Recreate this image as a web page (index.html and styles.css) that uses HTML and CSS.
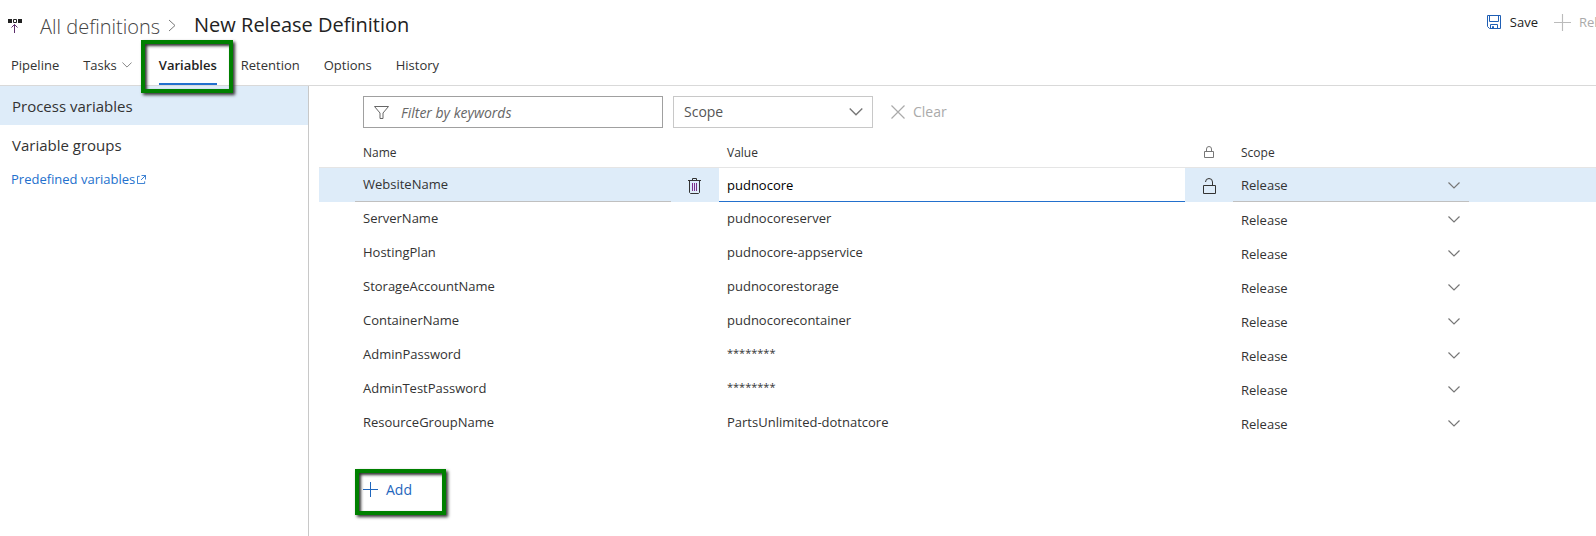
FILE: index.html
```html
<!DOCTYPE html>
<html lang="en">
<head>
<meta charset="utf-8">
<title>New Release Definition</title>
<link rel="stylesheet" href="styles.css">
</head>
<body>
<svg class="sprite" aria-hidden="true">
  <symbol id="chevron" viewBox="0 0 12 7"><path d="M.5 .5 6 6 11.5 .5" fill="none" stroke="currentColor" stroke-width="1.200"/></symbol>
  <symbol id="plus" viewBox="0 0 15 15"><path d="M7.5 0V15M0 7.5H15" fill="none" stroke="currentColor"/></symbol>
</svg>
<header class="top">
  <div class="titlebar">
    <svg class="release-icon" width="14" height="15" viewBox="0 0 14 15"><path d="M0 1h4v4H0zM10 1h4v4h-4z" fill="#222"/><path d="M5.500 1.500h3v3h-3z" fill="none" stroke="#222"/><path d="M6.500 15V6.500M3.500 9.500l3-3 3 3" fill="none" stroke="#5c2d6b"/></svg>
    <a class="crumb" href="#">All definitions</a>
    <svg class="crumb-sep" width="8" height="13" viewBox="0 0 8 13"><path d="M1 1l6 5.500L1 12" fill="none" stroke="#777"/></svg>
    <h1>New Release Definition</h1>
    <div class="actions">
      <button class="action" type="button"><svg width="14" height="14" viewBox="0 0 14 14"><path d="M.5 .5h13v13h-11l-2-2zM2.500 .5v6h9v-6M3.500 13.500v-4h7v4M5.500 13.500v-2h1v2" fill="none" stroke="#1f5fb5"/></svg>Save</button>
      <button class="action action-release" type="button" disabled><svg width="17" height="17"><use href="#plus"/></svg>Release</button>
    </div>
  </div>
  <nav class="tabs">
    <a href="#">Pipeline</a>
    <a href="#" class="tab-menu">Tasks<svg width="10" height="6"><use href="#chevron"/></svg></a>
    <a href="#" class="active" aria-current="page">Variables</a>
    <a href="#">Retention</a>
    <a href="#">Options</a>
    <a href="#">History</a>
  </nav>
</header>
<div class="body">
  <aside class="side">
    <a class="side-item selected" href="#">Process variables</a>
    <a class="side-item" href="#">Variable groups</a>
    <a class="side-link" href="#">Predefined variables<svg width="9" height="9" viewBox="0 0 10 10"><path d="M3 1.500H.5v8h8V7M5 .5h4.500V5M9.500 .5l-5 5" fill="none" stroke="currentColor"/></svg></a>
  </aside>
  <main class="main">
    <div class="filters">
      <label class="search"><svg width="15" height="13" viewBox="0 0 15 13"><path d="M.5 .5h14L9 7v5.500H6V7z" fill="none" stroke="#666"/></svg><input type="text" placeholder="Filter by keywords" aria-label="Filter by keywords"></label>
      <span class="pick scope-filter"><select aria-label="Scope filter"><option>Scope</option></select><svg width="14" height="8"><use href="#chevron"/></svg></span>
      <button class="clear" type="button" disabled><svg width="14" height="14" viewBox="0 0 14 14"><path d="M.5 .5l13 13M13.500 .5l-13 13" fill="none" stroke="#aaa" stroke-width="1.200"/></svg>Clear</button>
    </div>
    <table class="vars">
      <colgroup><col class="c-name"><col class="c-icon"><col><col class="c-icon"><col class="c-scope"><col class="c-rest"></colgroup>
      <thead>
        <tr><th class="name">Name</th><th></th><th>Value</th><th class="icon"><svg width="10" height="13" viewBox="0 0 10 13"><path d="M.5 5.500h9v6h-9zM2.500 5.500V3a2.500 2.500 0 0 1 5 0v2.500" fill="none" stroke="#777"/></svg></th><th>Scope</th><th></th></tr>
      </thead>
      <tbody>
        <tr class="selected">
          <td class="name"><span class="field">WebsiteName</span></td>
          <td class="icon trash"><button type="button" aria-label="Delete"><svg width="13" height="16" viewBox="0 0 13 16"><path d="M0 2.500h13M4.500 2.500v-2h4v2M1.500 2.500v12l1 1h8l1-1v-12" fill="none" stroke="#333"/><path d="M4.500 5v8M6.500 5v8M8.500 5v8" fill="none" stroke="#7b2d8b"/></svg></button></td>
          <td class="edit"><input type="text" value="pudnocore" aria-label="Value"></td>
          <td class="icon"><button type="button" aria-label="Lock value"><svg width="13" height="16" viewBox="0 0 13 16"><path d="M.5 7.500h12v8H.5zM9.500 7.500V4a3.500 3.500 0 0 0-7 0" fill="none" stroke="#333"/></svg></button></td>
          <td class="scope"><span class="pick"><select aria-label="Scope"><option>Release</option></select><svg width="12" height="7"><use href="#chevron"/></svg></span></td><td></td>
        </tr>
        <tr><td class="name">ServerName</td><td></td><td>pudnocoreserver</td><td></td><td class="scope"><span class="pick"><select aria-label="Scope"><option>Release</option></select><svg width="12" height="7"><use href="#chevron"/></svg></span></td><td></td></tr>
        <tr><td class="name">HostingPlan</td><td></td><td>pudnocore-appservice</td><td></td><td class="scope"><span class="pick"><select aria-label="Scope"><option>Release</option></select><svg width="12" height="7"><use href="#chevron"/></svg></span></td><td></td></tr>
        <tr><td class="name">StorageAccountName</td><td></td><td>pudnocorestorage</td><td></td><td class="scope"><span class="pick"><select aria-label="Scope"><option>Release</option></select><svg width="12" height="7"><use href="#chevron"/></svg></span></td><td></td></tr>
        <tr><td class="name">ContainerName</td><td></td><td>pudnocorecontainer</td><td></td><td class="scope"><span class="pick"><select aria-label="Scope"><option>Release</option></select><svg width="12" height="7"><use href="#chevron"/></svg></span></td><td></td></tr>
        <tr><td class="name">AdminPassword</td><td></td><td class="secret">********</td><td></td><td class="scope"><span class="pick"><select aria-label="Scope"><option>Release</option></select><svg width="12" height="7"><use href="#chevron"/></svg></span></td><td></td></tr>
        <tr><td class="name">AdminTestPassword</td><td></td><td class="secret">********</td><td></td><td class="scope"><span class="pick"><select aria-label="Scope"><option>Release</option></select><svg width="12" height="7"><use href="#chevron"/></svg></span></td><td></td></tr>
        <tr><td class="name">ResourceGroupName</td><td></td><td>PartsUnlimited-dotnatcore</td><td></td><td class="scope"><span class="pick"><select aria-label="Scope"><option>Release</option></select><svg width="12" height="7"><use href="#chevron"/></svg></span></td><td></td></tr>
      </tbody>
    </table>
    <button class="add" type="button"><svg width="15" height="15"><use href="#plus"/></svg>Add</button>
  </main>
</div>
</body>
</html>
```
FILE: styles.css
```css
* { box-sizing: border-box; }
html, body { height: 100%; }
body {
  margin: 0;
  display: flex;
  flex-direction: column;
  background: #fff;
  color: #333;
  font: 13px/20px "Open Sans", "Noto Sans", sans-serif;
}
a { color: inherit; text-decoration: none; }
button, input, select { font: inherit; color: inherit; }
button { background: none; border: 0; padding: 0; }
svg { flex: none; display: block; }
.sprite { position: absolute; width: 0; height: 0; }

.top { border-bottom: 1px solid #d9d9d9; overflow: visible; }
.titlebar { display: flex; align-items: center; height: 50px; padding-left: 8px; white-space: nowrap; overflow: hidden; }
.crumb { margin-left: 18px; font-size: 20px; line-height: 28px; font-weight: 300; padding-top: 3px; color: #444; }
.crumb-sep { margin: 0 18px 0 8px; }
h1 { margin: 0; font-size: 20px; line-height: 28px; font-weight: 400; color: #222; }
.actions { display: flex; gap: 16px; margin-left: auto; padding-bottom: 6px; }
.action { display: flex; align-items: center; gap: 9px; color: #222; }
.action-release { width: 42px; gap: 8px; overflow: hidden; color: #aaa; }
.action-release svg { color: #bbb; }

.tabs { display: flex; gap: 24px; padding-left: 11px; height: 35px; }
.tabs a { position: relative; line-height: 30px; }
.tabs .tab-menu { display: flex; align-items: center; gap: 5px; height: 30px; margin-right: 3px; color: #333; }
.tab-menu svg { color: #888; }
.tabs .active { font-weight: 600; color: #222; border-bottom: 2px solid #2370cd; }
.active::after, .add::after {
  content: "";
  position: absolute;
  border: 4px solid #008000;
  box-shadow: 2px 2px 3px #333, inset 2px 2px 3px #333;
  pointer-events: none;
  z-index: 2;
}
.active::after { inset: -10px -16px -10px -18px; }

.body { display: flex; flex: 1; }
.side { width: 309px; flex: none; border-right: 1px solid #c8c8c8; }
.side-item { display: block; height: 39px; padding-left: 12px; font-size: 15px; line-height: 41px; }
.side-item.selected { background: #deecf9; }
.side-link { display: flex; align-items: center; gap: 2px; padding: 5px 0 0 11px; color: #2370cd; }

.main { flex: 1; min-width: 0; padding: 10px 0 0 10px; }
.filters { display: flex; gap: 10px; padding-left: 44px; font-size: 14px; }
.search { display: flex; align-items: center; gap: 12px; width: 300px; height: 32px; padding-left: 10px; border: 1px solid #a0a0a0; }
.search input { flex: 1; min-width: 0; border: 0; outline: 0; padding: 2px 0 0; background: none; }
.search input::placeholder { font-style: italic; color: #666; opacity: 1; }
.pick { display: grid; align-items: center; color: #333; }
.pick select, .pick svg { grid-area: 1 / 1; }
.pick select { appearance: none; border: 0; background: none; width: 100%; height: 30px; padding: 0 8px; }
.pick svg { justify-self: end; margin-right: 9px; color: #777; pointer-events: none; }
.scope-filter { width: 200px; height: 32px; border: 1px solid #c8c8c8; color: #555; }
.scope-filter select { padding-left: 10px; }
.clear { display: flex; align-items: center; gap: 8px; margin-left: 8px; color: #aaa; }

.vars { width: 100%; table-layout: fixed; border-collapse: collapse; margin-top: 7px; }
.c-name { width: 352px; }
.c-icon { width: 48px; }
.c-scope { width: 236px; }
.c-rest { width: 127px; }
th, td { height: 34px; padding: 0 8px 2px; text-align: left; font-weight: 400; line-height: 20px; }
th { height: 32px; padding: 4px 8px 0; font-size: 12px; }
th.name, td.name { padding-left: 44px; }
thead tr { border-bottom: 1px solid #e5e5e5; }
.selected td { background: #deecf9; }
.selected .name { padding: 0 0 0 36px; }
.field { display: block; padding-left: 8px; line-height: 33px; border-bottom: 1px solid #c0c0c0; }
.icon button, th.icon svg { display: block; margin: 0 auto; }
.vars td.icon { padding: 2px 0 0; }
.vars td.trash { padding-right: 2px; }
.vars th.icon { padding: 3px 0 0; }
.selected td.edit { padding: 0; background: #fff; }
.edit input { display: block; width: 100%; height: 34px; border: 0; border-bottom: 1px solid #2370cd; padding: 2px 8px 0; outline: 0; color: #000; }
td.scope { padding: 0; }
td.scope .pick { height: 34px; padding-top: 2px; }
.selected .pick { border-bottom: 1px solid #c0c0c0; }
td.secret { font-size: 11px; padding-bottom: 4px; }

.add { position: relative; display: flex; align-items: center; gap: 8px; margin: 40px 0 0 44px; font-size: 14px; color: #1f66bd; }
.add::after { inset: -11px -34px -15px -8px; }
```
